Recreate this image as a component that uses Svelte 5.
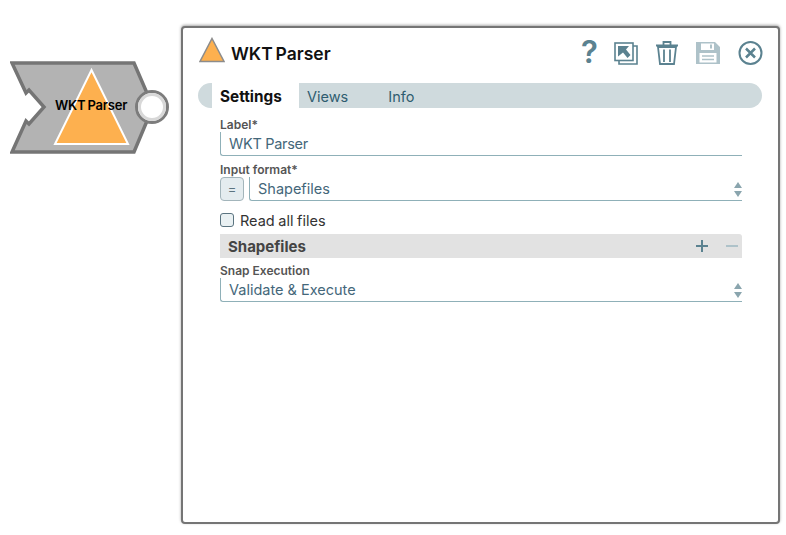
<script>
  const tabs = ['Settings', 'Views', 'Info'];
  let readAll = $state(false);
</script>

<div class="page">
  <div class="node">
    <svg width="160" height="94" viewBox="0 0 160 94">
      <path d="M2 2 H124 L137 32 V60 L124 91 H2 L16 60 L19 63 L34 46 L19 29 L16 32 Z" fill="#b3b3b3" stroke="#757575" stroke-width="3.500" />
      <path d="M81.500 9 L118 83 H45 Z" fill="#fdb04f" stroke="#fff" stroke-width="2" />
      <circle cx="142" cy="46" r="15.500" fill="#fff" stroke="#7c7c7c" stroke-width="3" />
      <circle cx="142" cy="46" r="12.500" fill="#fff" stroke="#d8d8d8" stroke-width="3" />
    </svg>
    <span class="node-name">WKT Parser</span>
  </div>

  <section class="panel">
    <header class="head">
      <svg class="logo" width="26" height="26" viewBox="0 0 26 26">
        <path d="M13 1.500 L25 24.500 H1 Z" fill="#fdb04f" stroke="#8c8c8c" stroke-width="1.500" />
      </svg>
      <h1>WKT Parser</h1>
      <div class="tools">
        <span class="help">?</span>
        <svg width="24" height="23" viewBox="0 0 24 23" fill="none" stroke="#5b8290" stroke-width="1.600">
          <path d="M5 18 V22 H23 V4 H19" />
          <rect x="1" y="1" width="18" height="17.500" />
          <path d="M4 4 H15 L12 7.500 L16.500 13 L13.500 16 L9 10.500 L4 14.500 Z" fill="#5b8290" stroke="none" />
        </svg>
        <svg width="22" height="24" viewBox="0 0 22 24" fill="none" stroke="#5b8290" stroke-width="1.800">
          <path d="M0 4.500 H22 M7.500 3.500 V1 H14.500 V3.500" />
          <path d="M2 6 L4 23 H18 L20 6 Z M8 8.500 V21 M14 8.500 V21" />
        </svg>
        <svg width="24" height="22" viewBox="0 0 24 22">
          <path fill-rule="evenodd" d="M0 0 H19 L24 5 V22 H0 Z M5 1.500 V8 H18 V1.500 Z M14 2.500 H16 V6.500 H14 Z M3.500 11 V20.500 H20.500 V11 Z" fill="#aec2c9" />
          <path d="M6 14 H18 M6 17.500 H18" stroke="#aec2c9" stroke-width="1.500" />
        </svg>
        <svg width="25" height="24" viewBox="0 0 25 24" fill="none" stroke="#5b8290" stroke-width="2">
          <circle cx="12.500" cy="12" r="11" />
          <path d="M8 7.500 L17 16.500 M17 7.500 L8 16.500" stroke-width="2.500" />
        </svg>
      </div>
    </header>

    <nav class="tabs">
      {#each tabs as tab, i}
        <span class="tab" class:active={i === 0}>{tab}</span>
      {/each}
    </nav>

    <div class="form">
      <div class="field">
        <span class="label">Label*</span>
        <div class="input tight">WKT Parser</div>
      </div>

      <div class="field format">
        <span class="label">Input format*</span>
        <div class="row">
          <button class="expr">=</button>
          <div class="input select">
            Shapefiles
            <span class="arrows"></span>
          </div>
        </div>
      </div>

      <label class="check">
        <input type="checkbox" bind:checked={readAll} />
        Read all files
      </label>

      <div class="section">
        <span>Shapefiles</span>
        <svg width="46" height="14" viewBox="0 0 46 14">
          <path d="M7 1 V13 M1 7 H13" stroke="#5b8290" stroke-width="2" />
          <path d="M31 7 H43" stroke="#aec2c9" stroke-width="2" />
        </svg>
      </div>

      <div class="field">
        <span class="label">Snap Execution</span>
        <div class="input select">
          Validate &amp; Execute
          <span class="arrows"></span>
        </div>
      </div>
    </div>
  </section>
</div>

<style>
  :global(body) {
    margin: 0;
    background: #fff;
    font-family: Inter, "Liberation Sans", sans-serif;
  }

  .page {
    display: flex;
    align-items: flex-start;
    width: 786px;
    height: 535px;
    padding: 26px 0 0 10px;
    box-sizing: border-box;
    overflow: hidden;
  }

  .node {
    position: relative;
    width: 160px;
    height: 94px;
    margin-top: 35px;
  }

  .node svg {
    display: block;
  }

  .node-name {
    position: absolute;
    left: 45px;
    top: 36px;
    font-size: 13px;
    font-weight: 600;
    letter-spacing: -0.2px;
    word-spacing: -1px;
    color: #000;
    white-space: nowrap;
  }

  .panel {
    width: 599px;
    height: 498px;
    margin-left: 11px;
    box-sizing: border-box;
    border: 2px solid #757575;
    border-radius: 4px;
    box-shadow: 0 -1px 3px rgba(0, 0, 0, 0.35);
    background: #fff;
  }

  .head {
    display: flex;
    align-items: center;
    height: 50px;
    padding: 0 15px 0 16px;
  }

  .logo {
    margin-bottom: 6px;
  }

  .head h1 {
    margin: 0 0 0 6px;
    font-size: 17.500px;
    font-weight: 600;
    word-spacing: -1.500px;
    color: #111;
  }

  .tools {
    display: flex;
    align-items: center;
    gap: 18px;
    margin-left: auto;
  }

  .help {
    width: 15px;
    font-size: 31px;
    font-weight: 600;
    line-height: 26px;
    text-align: center;
    color: #5b8290;
    margin-top: -3px;
  }

  .tabs {
    display: flex;
    height: 25px;
    margin: 5px 16px 0 15px;
    padding-left: 14px;
    background: #cfdadd;
    border-radius: 12.500px;
  }

  .tab {
    font-size: 14.500px;
    line-height: 27px;
    color: #2f5d70;
    margin-right: 40px;
  }

  .tab.active {
    margin-right: 8px;
    padding: 0 8px;
    width: 71px;
    background: #fff;
    font-size: 15.300px;
    font-weight: 700;
    color: #111;
  }

  .form {
    display: flex;
    flex-direction: column;
    margin: 10px 36px 0 37px;
  }

  .label {
    display: block;
    font-size: 12px;
    font-weight: 600;
    line-height: 14px;
    color: #555;
  }

  .input {
    position: relative;
    height: 24px;
    padding-left: 8px;
    box-sizing: border-box;
    border-left: 1px solid #8fb0b8;
    border-bottom: 1px solid #8fb0b8;
    border-bottom-left-radius: 3px;
    font-size: 14.500px;
    line-height: 24px;
    color: #44677a;
  }

  .tight {
    letter-spacing: -0.3px;
  }

  .format {
    margin-top: 7px;
  }

  .row {
    display: flex;
    gap: 5px;
  }

  .row .input {
    flex: 1;
  }

  .expr {
    width: 24px;
    height: 24px;
    padding: 0;
    border: 1px solid #a3b5bb;
    border-radius: 4px;
    background: #e4ecef;
    font-size: 13px;
    color: #5b7480;
    font-family: inherit;
  }

  .arrows {
    position: absolute;
    right: 0;
    top: 5px;
    width: 8px;
    height: 15px;
  }

  .arrows::before,
  .arrows::after {
    content: '';
    position: absolute;
    left: 0;
    border-left: 4px solid transparent;
    border-right: 4px solid transparent;
  }

  .arrows::before {
    top: 0;
    border-bottom: 6px solid #8aa5ae;
  }

  .arrows::after {
    bottom: 0;
    border-top: 6px solid #8aa5ae;
  }

  .check {
    display: flex;
    align-items: center;
    gap: 6px;
    height: 20px;
    margin-top: 9px;
    font-size: 14.500px;
    word-spacing: -0.500px;
    color: #333;
  }

  .check input {
    appearance: none;
    width: 14px;
    height: 14px;
    margin: 0;
    border: 1.500px solid #5b7480;
    border-radius: 3px;
    background: #eaf1f3;
  }

  .section {
    display: flex;
    align-items: center;
    justify-content: space-between;
    height: 24px;
    margin-top: 4px;
    padding: 0 1px 0 8px;
    background: #e2e2e2;
    border-top-right-radius: 3px;
    font-size: 15px;
    font-weight: 700;
    color: #444;
  }

  .section + .field {
    margin-top: 6px;
  }
</style>
